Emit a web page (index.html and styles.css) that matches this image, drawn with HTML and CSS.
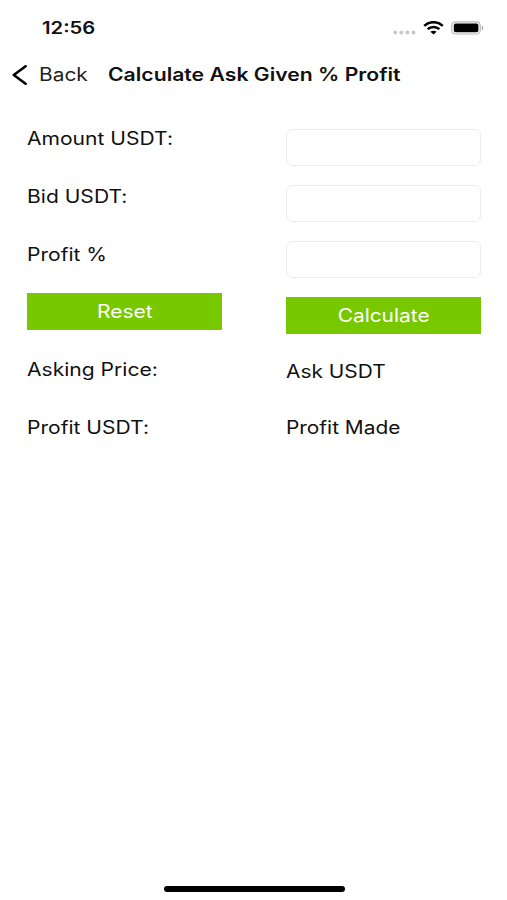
FILE: index.html
```
<!DOCTYPE html>
<html lang="en">
<head>
    <meta charset="UTF-8">
    <meta name="viewport" content="width=device-width, initial-scale=1.0">
    <title>Calculate Ask Given % Profit</title>
    <link rel="stylesheet" href="styles.css">
</head>
<body>
    <div class="status">
        <span class="time wide">12:56</span>
        <div class="status-icons">
            <svg class="dots" width="23" height="5" viewBox="0 0 23 5">
                <circle cx="2.2" cy="2.5" r="1.9"/>
                <circle cx="8.3" cy="2.5" r="1.9"/>
                <circle cx="14.4" cy="2.5" r="1.9"/>
                <circle cx="20.5" cy="2.5" r="1.9"/>
            </svg>
            <svg class="wifi" width="21" height="14" viewBox="0 0 21 14">
                <path d="M1.2 4.9C6.3-.1 14.7-.1 19.8 4.9"/>
                <path d="M4.6 8.2C8 5.1 13 5.1 16.4 8.2"/>
                <path class="fill" d="M7.4 10.7C9 9.3 12 9.3 13.6 10.7L10.5 13.5Z"/>
            </svg>
            <svg class="battery" width="33" height="14" viewBox="0 0 33 14">
                <rect class="shell" x=".8" y=".8" width="28.4" height="12.2" rx="3.6"/>
                <rect x="2.8" y="2.6" width="24.6" height="8.7" rx="1.8"/>
                <path class="cap" d="M30.8 4.8Q32.4 5.4 32.4 7T30.8 9.2Z"/>
            </svg>
        </div>
    </div>
    <nav>
        <a class="back" href="#">
            <svg width="15" height="20" viewBox="0 0 15 20">
                <path d="M13.6 1.2L1.8 10L13.6 18.8"/>
            </svg>
            <span class="wide">Back</span>
        </a>
        <h1 class="wide">Calculate Ask Given % Profit</h1>
    </nav>
    <form class="calculator">
        <div class="left">
            <label for="amount"><span class="wide">Amount USDT:</span></label>
            <label for="bid"><span class="wide">Bid USDT:</span></label>
            <label for="profit"><span class="wide">Profit %</span></label>
            <button type="reset"><span class="wide">Reset</span></button>
            <p><span class="wide">Asking Price:</span></p>
            <p><span class="wide">Profit USDT:</span></p>
        </div>
        <div class="right">
            <input type="text" id="amount">
            <input type="text" id="bid">
            <input type="text" id="profit">
            <button type="button"><span class="wide">Calculate</span></button>
            <p><span class="wide">Ask USDT</span></p>
            <p><span class="wide">Profit Made</span></p>
        </div>
    </form>
    <div class="home-bar"></div>
</body>
</html>
```
FILE: styles.css
```
*{
    margin: 0;
    padding: 0;
    box-sizing: border-box;
}
body{
    height: 900px;
    display: flex;
    flex-direction: column;
    background-color: white;
    color: #111;
    font-family: Inter, "Liberation Sans", sans-serif;
    font-size: 18px;
    overflow: hidden;
}
/* the type is a little wider than normal */
.wide{
    display: inline-block;
    white-space: nowrap;
    transform: scaleX(1.16);
    transform-origin: left center;
}
.status{
    height: 55px;
    padding: 0 23px 0 42px;
    display: flex;
    align-items: center;
    justify-content: space-between;
}
.time{
    font-size: 17px;
    font-weight: 600;
    transform: scaleX(1.19);
}
.status-icons{
    display: flex;
    align-items: center;
}
.dots{
    fill: #c8c8c8;
    margin: 9px 7px 0 0;
}
.wifi{
    fill: none;
    stroke: black;
    stroke-width: 2.5;
    margin-right: 7px;
}
.wifi .fill{
    fill: black;
    stroke: none;
}
.battery .shell{
    fill: none;
    stroke: #b5b5b5;
    stroke-width: 1.2;
}
.battery .cap{
    fill: #a5a5a5;
}
nav{
    height: 39px;
    padding-left: 12px;
    display: flex;
    align-items: center;
}
.back{
    width: 96px;
    display: flex;
    align-items: center;
    gap: 12px;
    color: #222;
    text-decoration: none;
}
.back svg{
    fill: none;
    stroke: black;
    stroke-width: 2.6;
    stroke-linecap: round;
    stroke-linejoin: round;
}
h1{
    font-size: 18px;
    font-weight: 600;
}
h1.wide{
    transform: scaleX(1.177);
}
.calculator{
    padding: 25px 26px 0 27px;
    display: grid;
    grid-template-columns: 195px 195px;
    justify-content: space-between;
    font-feature-settings: "calt" 0;
}
.left, .right{
    display: flex;
    flex-direction: column;
}
.left{
    gap: 22px;
}
.left .wide{
    transform: scaleX(1.17);
}
.right{
    padding-top: 10px;
    gap: 19px;
}
label{
    height: 36px;
    line-height: 39px;
}
p{
    height: 36px;
    line-height: 36px;
}
.right p{
    height: 37px;
    line-height: 38px;
}
input{
    width: 195px;
    height: 37px;
    border: 1px solid #ededed;
    border-radius: 6px;
    background-color: white;
    padding: 0 8px;
    font: inherit;
}
button{
    height: 37px;
    border: none;
    background-color: #78c800;
    color: white;
    font: inherit;
    cursor: pointer;
}
button .wide{
    transform-origin: center;
}
.home-bar{
    width: 181px;
    height: 6px;
    margin: auto auto 8px 164px;
    border-radius: 3px;
    background-color: black;
}
```
